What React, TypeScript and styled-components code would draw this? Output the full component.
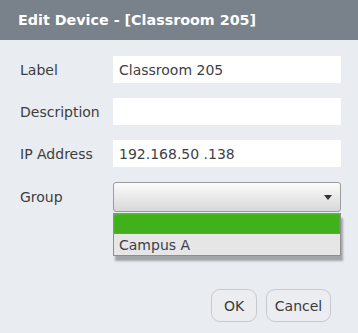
import styled, { createGlobalStyle } from "styled-components";

const GlobalStyle = createGlobalStyle`
    html, body {
        margin: 0;
        padding: 0;
        background: #e9ecf0;
    }
    * {
        box-sizing: border-box;
    }
`;

const Dialog = styled.div`
    width: 358px;
    height: 333px;
    background: #e9ecf0;
    font-family: "DejaVu Sans", Verdana, sans-serif;
    font-size: 14px;
    color: #3a3a3a;
    display: flex;
    flex-direction: column;
`;

const TitleBar = styled.header`
    height: 40px;
    background: #79828b;
    color: #ffffff;
    font-weight: bold;
    font-size: 14.3px;
    display: flex;
    align-items: center;
    padding: 0 18px 1px;
`;

const Form = styled.div`
    padding: 16px 17px 0 20px;
    display: grid;
    grid-template-columns: 93px 1fr;
    row-gap: 15px;
    align-items: center;
`;

const Label = styled.label`
    color: #3d3d3d;
`;

const TextInput = styled.div`
    height: 27px;
    background: #ffffff;
    padding: 0 6px;
    display: flex;
    align-items: center;
    color: #3f3f46;
`;

const SelectWrap = styled.div`
    position: relative;
`;

const Select = styled.div`
    height: 30px;
    border: 1px solid #9b9b9b;
    border-radius: 3px;
    background: linear-gradient(#fbfbfb, #d8d8d8);
    display: flex;
    align-items: center;
    justify-content: flex-end;
    padding-right: 8px;
`;

const Caret = styled.span`
    width: 0;
    height: 0;
    border-left: 4px solid transparent;
    border-right: 4px solid transparent;
    border-top: 5px solid #333;
`;

// dropdown list lies over the rest of the form
const OptionList = styled.div`
    position: absolute;
    left: 0;
    right: 0;
    top: 31px;
    border: 1px solid #8e8e8e;
    background: #e6e6e6;
    box-shadow: 2px 5px 2px rgba(0, 0, 0, 0.3);
`;

const Option = styled.div<{ $selected?: boolean }>`
    height: ${(p) => (p.$selected ? "20px" : "21px")};
    display: flex;
    align-items: center;
    padding: 1px 0 0 5px;
    color: #3a3f4a;
    background: ${(p) => (p.$selected ? "#40b11b" : "#e6e6e6")};
    outline: ${(p) => (p.$selected ? "1px dotted #a07ab8" : "none")};
    outline-offset: -1px;
`;

const Footer = styled.footer`
    margin-top: 77px;
    padding-right: 27px;
    display: flex;
    justify-content: flex-end;
    gap: 9px;
`;

const Button = styled.button<{ $width: number }>`
    width: ${(p) => p.$width}px;
    height: 33px;
    padding: 0;
    border: 1px solid #c6cbd2;
    border-radius: 9px;
    background: #ebedf0;
    font-family: inherit;
    font-size: 14px;
    color: #3a3a3a;
`;

export default function App() {
    return (
        <>
            <GlobalStyle />
            <Dialog>
                <TitleBar>Edit Device - [Classroom 205]</TitleBar>
                <Form>
                    <Label>Label</Label>
                    <TextInput>Classroom 205</TextInput>
                    <Label>Description</Label>
                    <TextInput />
                    <Label>IP Address</Label>
                    <TextInput>192.168.50 .138</TextInput>
                    <Label>Group</Label>
                    <SelectWrap>
                        <Select>
                            <Caret />
                        </Select>
                        <OptionList>
                            <Option $selected />
                            <Option>Campus A</Option>
                        </OptionList>
                    </SelectWrap>
                </Form>
                <Footer>
                    <Button $width={46}>OK</Button>
                    <Button $width={65}>Cancel</Button>
                </Footer>
            </Dialog>
        </>
    );
}
